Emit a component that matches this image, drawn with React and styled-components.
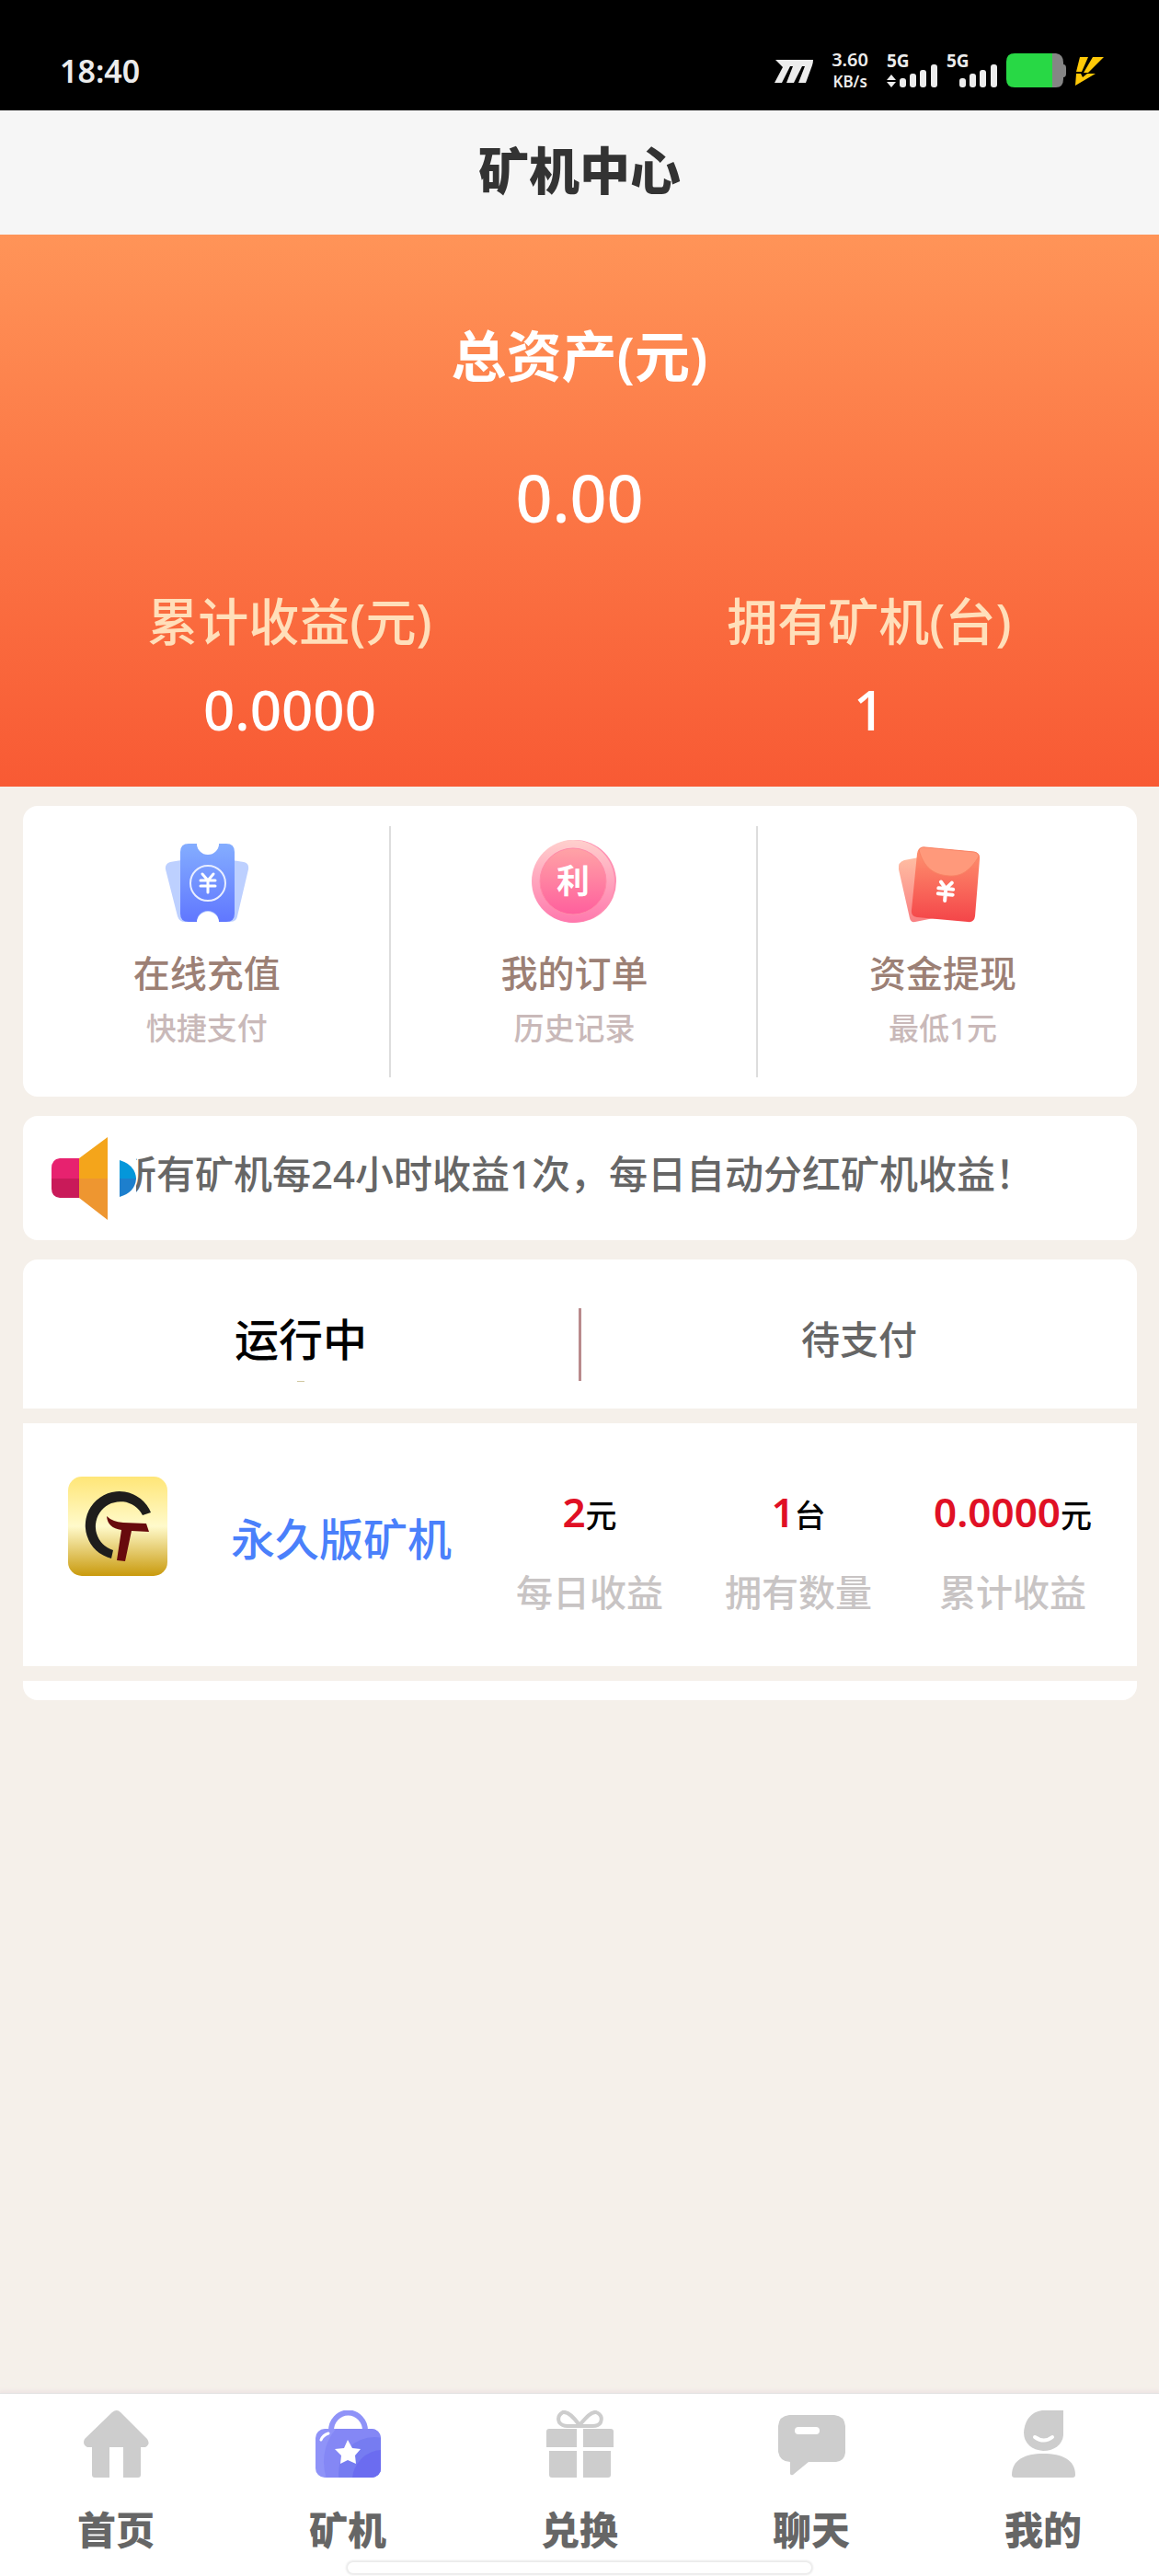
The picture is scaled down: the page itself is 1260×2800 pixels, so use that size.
import React from "react";
import styled, { createGlobalStyle } from "styled-components";

const GlobalStyle = createGlobalStyle`
  * { box-sizing: border-box; }
  body {
    margin: 0;
    background: #f5f0ea;
    font-family: "Noto Sans", "Noto Sans CJK SC", sans-serif;
    font-weight: 500;
    color: #666666;
  }
  button { border: 0; padding: 0; background: none; font: inherit; color: inherit; cursor: pointer; }
  a { color: inherit; text-decoration: none; }
  h1, h2, p, ul, dl, dd { margin: 0; padding: 0; }
  svg { display: block; flex: none; }
`;

const Page = styled.div`
  min-height: 100vh;
  display: flex;
  flex-direction: column;
`;

/* Status bar */
const StatusBar = styled.div`
  height: 120px;
  padding: 34px 60px 0 65px;
  display: flex;
  align-items: center;
  justify-content: space-between;
  background: #000000;
  color: #ececec;
`;

const Clock = styled.time`
  font-size: 34px;
  line-height: 40px;
  font-weight: 600;
`;

const StatusIcons = styled.div`
  display: flex;
  align-items: center;
  gap: 10px;
`;

const Speed = styled.div`
  margin: 0 10px;
  display: flex;
  flex-direction: column;
  align-items: center;
  font-size: 20px;
  line-height: 24px;
  font-weight: 600;
  small { font-size: 17px; }
`;

/* Header and summary */
const Header = styled.header`
  height: 135px;
  padding-bottom: 6px;
  display: flex;
  align-items: center;
  justify-content: center;
  background: #f6f6f6;
`;

const Title = styled.h1`
  font-size: 55px;
  line-height: 60px;
  font-weight: 900;
  color: #333333;
`;

const Hero = styled.section`
  height: 600px;
  padding-top: 88px;
  background: linear-gradient(#ff9458, #fc7b48 40%, #f85a34);
  color: #ffffff;
  text-align: center;
`;

const HeroLabel = styled.h2`
  font-size: 60px;
  line-height: 88px;
  font-weight: 600;
`;

const HeroValue = styled.p`
  margin-top: 64px;
  font-size: 70px;
  line-height: 92px;
`;

const HeroStats = styled.dl`
  margin-top: 48px;
  display: grid;
  grid-template-columns: 1fr 1fr;
`;

const HeroStat = styled.div`
  dt { font-size: 55px; line-height: 80px; color: #ffdfba; }
  dd { margin-top: 12px; font-size: 60px; line-height: 88px; }
`;

/* Cards */
const Main = styled.main`
  flex: 1;
  padding: 21px 24px 0 25px;
  display: flex;
  flex-direction: column;
  gap: 21px;
`;

const Card = styled.section`
  background: #ffffff;
  border-radius: 16px;
`;

const Actions = styled(Card)`
  padding: 22px 0 21px;
  display: grid;
  grid-template-columns: repeat(3, 33%);
`;

const Action = styled.a`
  height: 273px;
  padding: 12px 0 0 2px;
  display: flex;
  flex-direction: column;
  align-items: center;
  border-right: ${(p) => (p.$last ? "0" : "2px solid #dddddd")};
`;

const ActionName = styled.span`
  margin-top: 20px;
  font-size: 40px;
  line-height: 56px;
  color: #9c8075;
`;

const ActionHint = styled.span`
  margin-top: 8px;
  font-size: 33px;
  line-height: 48px;
  color: #c9b9b9;
`;

const Notice = styled(Card)`
  height: 135px;
  padding: 0 31px;
  display: flex;
  align-items: center;
`;

const Marquee = styled.p`
  flex: 1;
  min-width: 0;
  padding-bottom: 10px;
  overflow: hidden;
  white-space: nowrap;
  text-indent: -20px;
  font-size: 42px;
  line-height: 60px;
`;

const Miners = styled.section`
  display: flex;
  flex-direction: column;
  gap: 16px;
`;

const Tabs = styled.div`
  height: 162px;
  padding-top: 23px;
  display: grid;
  grid-template-columns: 1fr 3px 1fr;
  align-items: center;
  background: #ffffff;
  border-radius: 16px 16px 0 0;
`;

const Tab = styled.button`
  height: 80px;
  display: flex;
  flex-direction: column;
  align-items: center;
  justify-content: space-between;
  font-size: ${(p) => (p.$active ? 48 : 42)}px;
  line-height: 68px;
  color: ${(p) => (p.$active ? "#000000" : "#666666")};
  &::after {
    content: "";
    width: 8px;
    height: 1px;
    background: ${(p) => (p.$active ? "#d0c8a0" : "transparent")};
  }
`;

const TabDivider = styled.span`
  height: 79px;
  background: #b98a8c;
`;

const MinerRow = styled.article`
  height: 264px;
  padding: 58px 49px 0;
  display: flex;
  align-items: flex-start;
  background: #ffffff;
`;

const MinerName = styled.h2`
  margin: 32px 70px 0 69px;
  font-size: 48px;
  line-height: 72px;
  font-weight: 500;
  color: #4a80fb;
  white-space: nowrap;
`;

const MinerStats = styled.dl`
  flex: 1;
  margin-top: 10px;
  display: flex;
  justify-content: space-between;
`;

const MinerStat = styled.div`
  display: flex;
  flex-direction: column-reverse;
  align-items: center;
  gap: 28px;
  dt { font-size: 40px; line-height: 56px; color: #c8c4c4; }
  dd { font-size: 34px; line-height: 56px; color: #000000; white-space: nowrap; }
  strong { font-size: 44px; font-weight: 600; color: #e01025; }
`;

const ListEnd = styled.div`
  height: 21px;
  background: #ffffff;
  border-radius: 0 0 16px 16px;
`;

/* Bottom navigation */
const BottomNav = styled.nav`
  height: 199px;
  padding-top: 18px;
  display: flex;
  flex-direction: column;
  background: #ffffff;
  border-top: 1px solid #e2e2e2;
  box-shadow: 0 -1px 4px 1px #ece2e2;
`;

const NavItems = styled.div`
  display: grid;
  grid-template-columns: repeat(5, 1fr);
`;

const NavItem = styled.a`
  display: flex;
  flex-direction: column;
  align-items: center;
  gap: 27px;
  font-size: 42px;
  line-height: 60px;
  font-weight: 900;
`;

const HomeIndicator = styled.div`
  width: 40%;
  height: 12px;
  margin: 5px auto 0;
  border-radius: 6px;
  background: #ffffff;
  box-shadow: 0 0 2px 2px #eaeaea;
`;

const BrandMark = () => (
  <svg width="42" height="25" viewBox="0 0 42 25" fill="#ececec">
    <path d="M1 0H42Q42 3 41 6L34 25H26L33 7H30L21 25H13L20 7H17L8 25H0L9 8Z" />
  </svg>
);

const Signal = ({ arrows }) => (
  <svg width="55" height="54" viewBox="0 -8 55 54" fill="#ececec">
    <text x="0" y="15" fontSize="19" fontWeight="700">5G</text>
    {arrows && <path d="M5 23l5 6H0zM5 37l5-6H0z" />}
    <rect x="14" y="27" width="7" height="10" rx="3" />
    <rect x="25" y="22" width="7" height="15" rx="3" />
    <rect x="36" y="18" width="7" height="19" rx="3" />
    <rect x="48" y="12" width="7" height="25" rx="3" />
  </svg>
);

const Battery = () => (
  <svg width="65" height="38" viewBox="0 0 65 38">
    <path d="M50 0h4q8 1 8 10v2q3 0 3 4v6q0 4-3 4v2q0 9-8 9h-4z" fill="#858585" />
    <path d="M9 0h41v37H9Q0 37 0 28V9Q0 0 9 0z" fill="#28d845" />
  </svg>
);

const Bolt = () => (
  <svg width="31" height="31" viewBox="0 0 31 31" fill="#ffc907">
    <path d="M5 0h9L7 16H1zM19 0h12L14 17H9zM1 18h5l2 4 5-4h9L0 31z" />
  </svg>
);

const Yen = ({ x, y, w }) => (
  <path
    transform={`translate(${x} ${y})`}
    d="M-6-9L0-2 6-9M0-2V11M-8-2H8M-8 4H8"
    fill="none" stroke="#fff" strokeWidth={w} strokeLinecap="round"
  />
);

const TicketIcon = () => (
  <svg width="100" height="100" viewBox="0 0 100 100">
    <defs>
      <linearGradient id="ticket" x2="0" y2="1">
        <stop stopColor="#84adff" /><stop offset="1" stopColor="#6077ff" />
      </linearGradient>
    </defs>
    <path d="M22 25L10 27Q4 29 5 35L18 86Q20 92 26 92H75Q82 92 83 86L95 35Q96 28 90 27L78 25z" fill="#bdd0ff" />
    <path d="M30 7H39A12 12 0 0 0 63 7H71Q80 7 80 16V83Q80 92 71 92H63A12 12 0 0 0 39 92H30Q21 92 21 83V16Q21 7 30 7z" fill="url(#ticket)" />
    <path d="M39 6A12 12 0 0 0 63 6zM39 93A12 12 0 0 1 63 93z" fill="#fff" />
    <circle cx="51" cy="50" r="19" fill="none" stroke="#e8eeff" strokeWidth="2" />
    <Yen x={51} y={49} w={3} />
  </svg>
);

const CoinIcon = () => (
  <svg width="100" height="100" viewBox="0 0 100 100">
    <defs>
      <linearGradient id="rim" x2="0" y2="1">
        <stop stopColor="#ffd0cd" /><stop offset="1" stopColor="#ff78ad" />
      </linearGradient>
      <linearGradient id="face" x2="0" y2="1">
        <stop stopColor="#ffa3a6" /><stop offset="1" stopColor="#ff5f9d" />
      </linearGradient>
    </defs>
    <circle cx="51" cy="48" r="45" fill="#ff8fb2" />
    <circle cx="49" cy="48" r="45" fill="url(#rim)" />
    <circle cx="49" cy="48" r="36" fill="url(#face)" stroke="#ff8aa8" strokeWidth="1" />
    <text x="49" y="61" fontSize="36" fontWeight="700" textAnchor="middle" fill="#fff">利</text>
  </svg>
);

const EnvelopeIcon = () => (
  <svg width="100" height="100" viewBox="0 0 100 100">
    <defs>
      <linearGradient id="env" x2="0" y2="1">
        <stop stopColor="#ff9470" /><stop offset="1" stopColor="#f44549" />
      </linearGradient>
      <linearGradient id="envBack" x2="0" y2="1">
        <stop stopColor="#ffbda2" /><stop offset="1" stopColor="#f98083" />
      </linearGradient>
    </defs>
    <path d="M8 25L24 22 40 88 20 92Q15 93 14 88L2 35Q1 27 8 25z" fill="url(#envBack)" />
    <path d="M30 11L84 16Q91 17 90 24L85 86Q84 93 77 92L22 87Q15 86 16 79L22 18Q23 10 30 11z" fill="url(#env)" />
    <path d="M24 14Q26 10 31 11L84 16Q89 17 89 21C80 36 70 43 57 42C39 41 29 32 24 14z" fill="#ff997b" stroke="#f98365" strokeWidth="1" />
    <g transform="rotate(5 53 59)"><Yen x={53} y={58} w={4} /></g>
  </svg>
);

const SpeakerIcon = () => (
  <svg width="92" height="90" viewBox="0 0 92 90">
    <path d="M30 23H9Q0 24 0 34V45H30z" fill="#e7226f" />
    <path d="M30 66H9Q0 65 0 56V45H30z" fill="#c91a59" />
    <path d="M30 23L61 0V45H30z" fill="#f4a51b" />
    <path d="M30 66L61 90V45H30z" fill="#ee9630" />
    <path d="M74 25Q91 30 92 45H74z" fill="#0497da" />
    <path d="M74 65Q91 60 92 45H74z" fill="#1d7fcd" />
  </svg>
);

const MinerLogo = () => (
  <svg width="108" height="108" viewBox="0 0 108 108">
    <defs>
      <linearGradient id="gold" x2="0" y2="1">
        <stop stopColor="#ffe677" /><stop offset=".5" stopColor="#fffacb" /><stop offset="1" stopColor="#c99a0d" />
      </linearGradient>
    </defs>
    <rect width="108" height="108" rx="15" fill="url(#gold)" />
    <path d="M90 39A37 37 0 1 0 47 89L49 80A27 27 0 1 1 81 42z" fill="#1e1d1c" />
    <path d="M42 43Q48 49 60 50L85 51 88 60 69 59 62 92 53 91 58 58Q43 56 42 43z" fill="#680a0d" />
  </svg>
);

const NavSvg = ({ children }) => (
  <svg width="73" height="73" viewBox="0 0 73 73" fill="#cdcdcd">{children}</svg>
);

const HomeIcon = () => (
  <NavSvg>
    <path d="M32 2Q37-2 41 2L70 31Q74 37 68 40H63V70Q63 73 60 73H44V40H29V73H13Q10 73 10 70V40H5Q-1 37 2 31z" />
  </NavSvg>
);

const BagIcon = () => (
  <NavSvg>
    <defs><clipPath id="bag"><rect x="1" y="20" width="71" height="53" rx="10" /></clipPath></defs>
    <path d="M18 22A18 19 0 0 1 55 22" fill="none" stroke="#8f93f8" strokeWidth="6" />
    <g clipPath="url(#bag)">
      <rect y="20" width="73" height="53" fill="#8f93f8" />
      <circle cx="66" cy="56" r="56" fill="#8487f5" />
      <circle cx="65" cy="68" r="39" fill="#767cf1" />
      <circle cx="74" cy="76" r="33" fill="#6b6cf0" />
    </g>
    <path d="M36 32L41 41 50 42 44 49 45 58 36 54 28 58 29 49 22 42 32 41z" fill="#fff" />
    <path d="M7 32Q9 27 15 25" fill="none" stroke="#fff" strokeWidth="3" strokeLinecap="round" />
  </NavSvg>
);

const GiftIcon = () => (
  <NavSvg>
    <path d="M36 16C30 8 24 1 18 2Q11 6 14 13Q17 17 23 17H50Q57 17 59 13Q62 5 54 2C48 1 42 9 36 16z" fill="none" stroke="#cdcdcd" strokeWidth="4" />
    <path d="M3 20H33V40H0V23Q0 20 3 20zM40 20H70Q73 20 73 23V40H40zM3 44H33V73H6Q3 73 3 70zM40 44H70V70Q70 73 67 73H40z" />
  </NavSvg>
);

const ChatIcon = () => (
  <NavSvg>
    <path d="M12 5H61Q72 6 73 17V55Q72 66 63 67H33L16 73Q14 73 13 73V67Q2 66 0 55V17Q1 6 12 5z" fill="none" />
    <path d="M12 5H61Q72 6 73 17V46Q72 55 63 56H33L16 70Q14 71 13 69V56Q2 56 0 45V17Q1 6 12 5z" />
    <rect x="18" y="18" width="27" height="8" rx="4" fill="#fff" />
  </NavSvg>
);

const PersonIcon = () => (
  <NavSvg>
    <path d="M58 0V27C57 38 47 44 36 44C24 43 15 36 15 24C16 9 25 0 37 0z" />
    <path d="M27 29Q37 36 46 29" fill="none" stroke="#fff" strokeWidth="4" strokeLinecap="round" />
    <path d="M2 70C2 54 16 47 36 47C57 47 71 54 71 70Q71 73 68 73H5Q2 73 2 70z" />
  </NavSvg>
);

const actions = [
  { name: "在线充值", hint: "快捷支付", Icon: TicketIcon },
  { name: "我的订单", hint: "历史记录", Icon: CoinIcon },
  { name: "资金提现", hint: "最低1元", Icon: EnvelopeIcon },
];

const stats = [
  { label: "每日收益", value: "2", unit: "元" },
  { label: "拥有数量", value: "1", unit: "台" },
  { label: "累计收益", value: "0.0000", unit: "元" },
];

const navItems = [
  { name: "首页", Icon: HomeIcon },
  { name: "矿机", Icon: BagIcon },
  { name: "兑换", Icon: GiftIcon },
  { name: "聊天", Icon: ChatIcon },
  { name: "我的", Icon: PersonIcon },
];

export default function App() {
  return (
    <Page>
      <GlobalStyle />
      <StatusBar>
        <Clock>18:40</Clock>
        <StatusIcons>
          <BrandMark />
          <Speed><span>3.60</span><small>KB/s</small></Speed>
          <Signal arrows />
          <Signal />
          <Battery />
          <Bolt />
        </StatusIcons>
      </StatusBar>
      <Header><Title>矿机中心</Title></Header>
      <Hero>
        <HeroLabel>总资产(元)</HeroLabel>
        <HeroValue>0.00</HeroValue>
        <HeroStats>
          <HeroStat><dt>累计收益(元)</dt><dd>0.0000</dd></HeroStat>
          <HeroStat><dt>拥有矿机(台)</dt><dd>1</dd></HeroStat>
        </HeroStats>
      </Hero>
      <Main>
        <Actions>
          {actions.map(({ name, hint, Icon }, i) => (
            <Action key={name} href="#" $last={i === actions.length - 1}>
              <Icon />
              <ActionName>{name}</ActionName>
              <ActionHint>{hint}</ActionHint>
            </Action>
          ))}
        </Actions>
        <Notice>
          <SpeakerIcon />
          <Marquee>所有矿机每24小时收益1次，每日自动分红矿机收益！</Marquee>
        </Notice>
        <Miners>
          <Tabs>
            <Tab type="button" $active>运行中</Tab>
            <TabDivider />
            <Tab type="button">待支付</Tab>
          </Tabs>
          <MinerRow>
            <MinerLogo />
            <MinerName>永久版矿机</MinerName>
            <MinerStats>
              {stats.map(({ label, value, unit }) => (
                <MinerStat key={label}>
                  <dt>{label}</dt>
                  <dd><strong>{value}</strong>{unit}</dd>
                </MinerStat>
              ))}
            </MinerStats>
          </MinerRow>
          <ListEnd />
        </Miners>
      </Main>
      <BottomNav>
        <NavItems>
          {navItems.map(({ name, Icon }) => (
            <NavItem key={name} href="#"><Icon />{name}</NavItem>
          ))}
        </NavItems>
        <HomeIndicator />
      </BottomNav>
    </Page>
  );
}
